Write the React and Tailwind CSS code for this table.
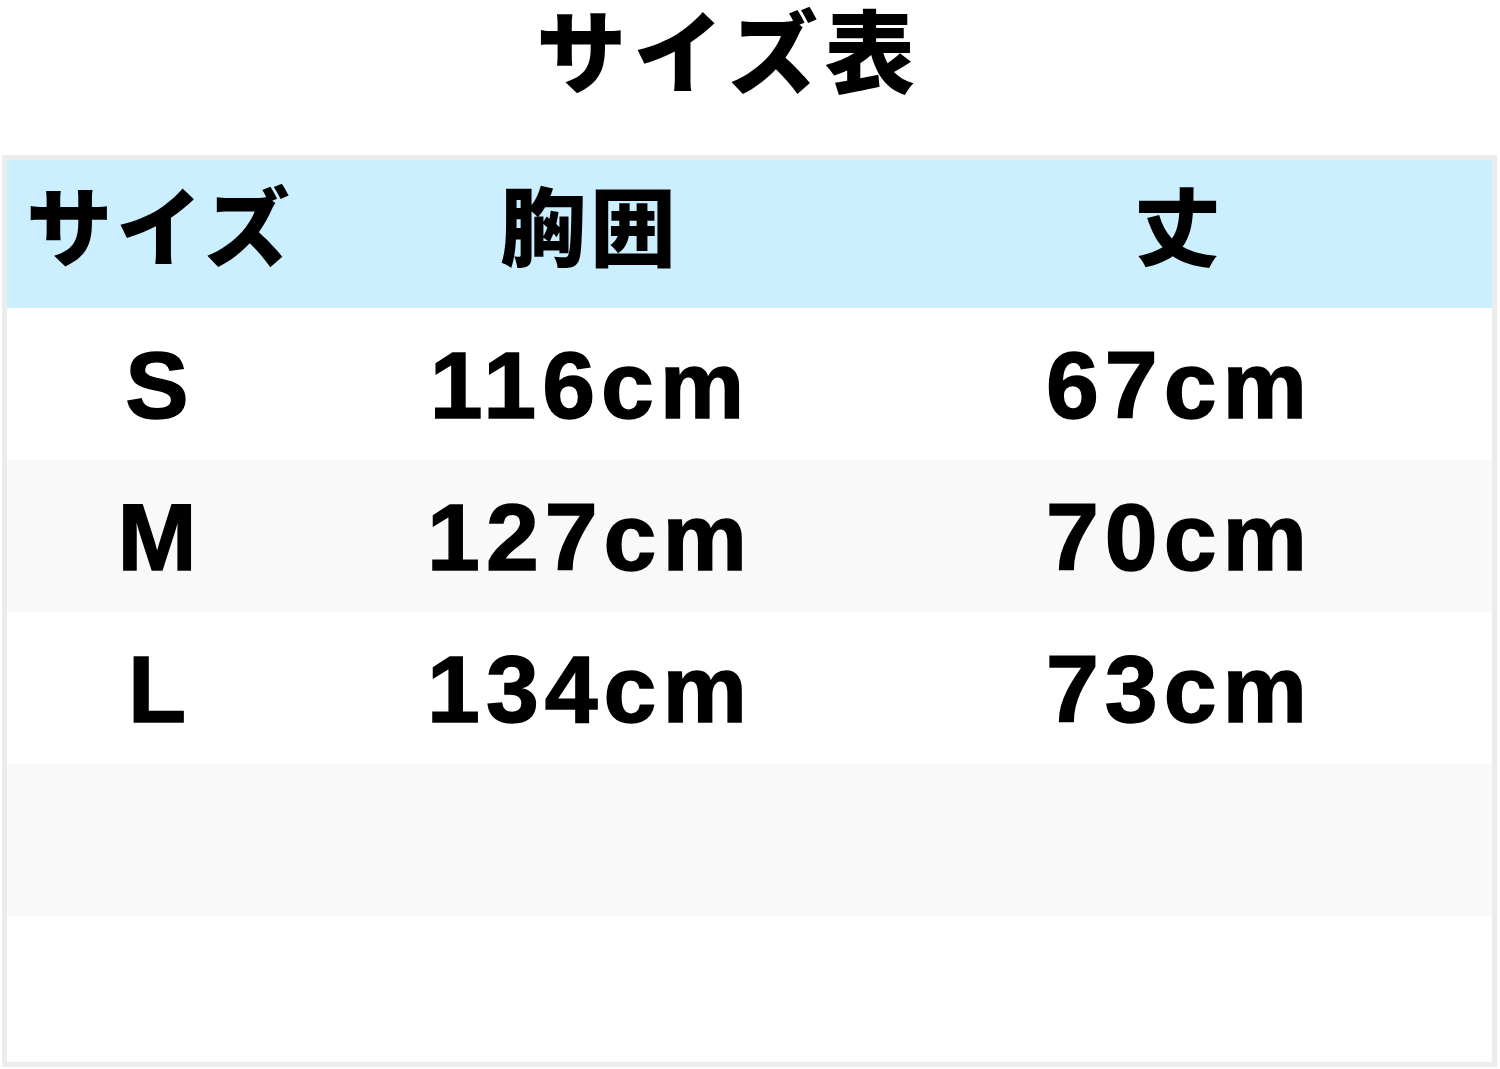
export default function App() {
  const font = { fontFamily: '"Noto Sans CJK JP", "Noto Sans", sans-serif' };
  const rows = [
    ["S", "116cm", "67cm"],
    ["M", "127cm", "70cm"],
    ["L", "134cm", "73cm"],
  ];
  const grid = "grid grid-cols-[306px_554px_1fr] items-center";
  return (
    <div className="w-[1500px] h-[1069px] bg-white text-black font-black" style={font}>
      <div className="h-[155px] flex justify-center items-start pr-[42px]">
        <div className="text-[90px] leading-[1.05] tracking-[7px] whitespace-nowrap">サイズ表</div>
      </div>
      <div className="ml-[2px] w-[1495px] h-[912px] border-[5px] border-[#ececec] flex flex-col">
        <div className={`${grid} h-[148px] bg-[#ccefff] text-[86px] leading-[1.2] tracking-[4px] pb-[22px]`}>
          <div className="text-center">サイズ</div>
          <div className="text-center">胸囲</div>
          <div className="text-center">丈</div>
        </div>
        {rows.map((r, i) => (
          <div
            key={r[0]}
            className={`${grid} h-[152px] text-[95px] leading-[1.2] tracking-[6px] font-bold font-['Liberation_Sans',Arial,sans-serif] [-webkit-text-stroke:1.5px_black] pt-[2px] ${i % 2 === 1 ? "bg-[#f9f9f9]" : "bg-white"}`}
          >
            <div className="text-center">{r[0]}</div>
            <div className="text-center">{r[1]}</div>
            <div className="text-center">{r[2]}</div>
          </div>
        ))}
        <div className="h-[152px] bg-[#f9f9f9]" />
        <div className="flex-1 bg-white" />
      </div>
    </div>
  );
}
